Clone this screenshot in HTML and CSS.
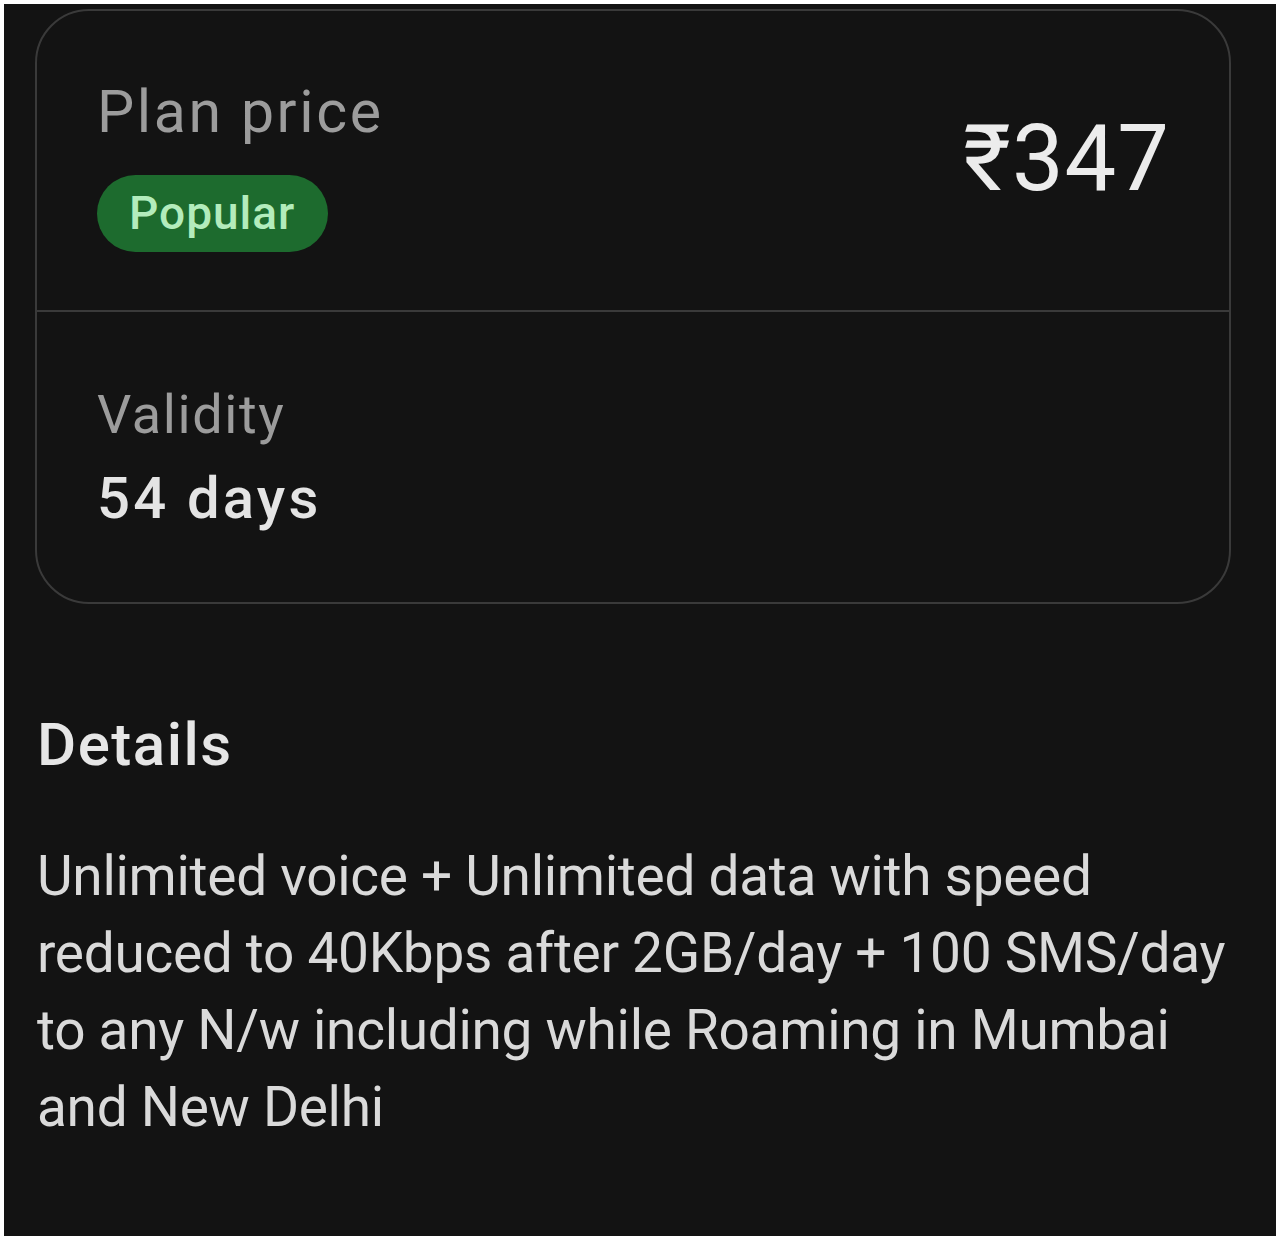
FILE: index.html
```html
<!DOCTYPE html>
<html lang="en">
<head>
    <meta charset="UTF-8">
    <meta name="viewport" content="width=device-width, initial-scale=1.0">
    <title>Plan details</title>
    <link rel="stylesheet" href="styles.css">
</head>
<body>
    <div class="screen">
        <div class="plan-card">
            <div class="plan-top">
                <div class="plan-left">
                    <div class="label">Plan price</div>
                    <span class="badge">Popular</span>
                </div>
                <div class="price">₹347</div>
            </div>
            <div class="plan-bottom">
                <div class="label small">Validity</div>
                <div class="value">54 days</div>
            </div>
        </div>

        <h2 class="details-title">Details</h2>
        <p class="details-text">Unlimited voice + Unlimited data with speed reduced to 40Kbps after 2GB/day + 100 SMS/day to any N/w including while Roaming in Mumbai and New Delhi</p>
    </div>
</body>
</html>
```

FILE: styles.css
```css
body {
    margin: 0;
    padding: 4px;
    background: #fff;
    font-family: Roboto, "Noto Sans", sans-serif;
}
.screen {
    width: 1272px;
    height: 1232px;
    box-sizing: border-box;
    background: #131313;
    padding: 5px 45px 0 31px;
    overflow: hidden;
}
.plan-card {
    border: 2px solid #3a3a3a;
    border-radius: 54px;
}
.plan-top {
    display: flex;
    justify-content: space-between;
    align-items: center;
    padding: 66px 59px 58px 60px;
    border-bottom: 2px solid #3a3a3a;
}
.plan-left {
    display: flex;
    flex-direction: column;
    align-items: flex-start;
    gap: 28px;
}
.label {
    color: #9c9c9c;
    font-size: 59px;
    line-height: 70px;
    letter-spacing: 2.6px;
}
.label.small {
    font-size: 54px;
    line-height: 64px;
    letter-spacing: 1.6px;
}
.badge {
    background: #1d6b2e;
    color: #b3ecbc;
    font-size: 46px;
    font-weight: 500;
    line-height: 77px;
    letter-spacing: 1px;
    padding: 0 33px 0 32px;
    border-radius: 40px;
}
.price {
    color: #ececec;
    font-size: 92px;
    line-height: 110px;
    letter-spacing: 1px;
    margin-bottom: 12px;
}
.plan-bottom {
    padding: 71px 60px 70px;
    display: flex;
    flex-direction: column;
    gap: 17px;
}
.value {
    color: #e4e4e4;
    font-size: 58px;
    font-weight: 500;
    line-height: 68px;
    letter-spacing: 3.2px;
}
.details-title {
    margin: 106px 0 0 2px;
    color: #e6e6e6;
    font-size: 60px;
    font-weight: 500;
    line-height: 70px;
    letter-spacing: 1.5px;
}
.details-text {
    margin: 58px 0 0 2px;
    color: #dadada;
    font-size: 55px;
    line-height: 77px;
    letter-spacing: -0.3px;
}
```
